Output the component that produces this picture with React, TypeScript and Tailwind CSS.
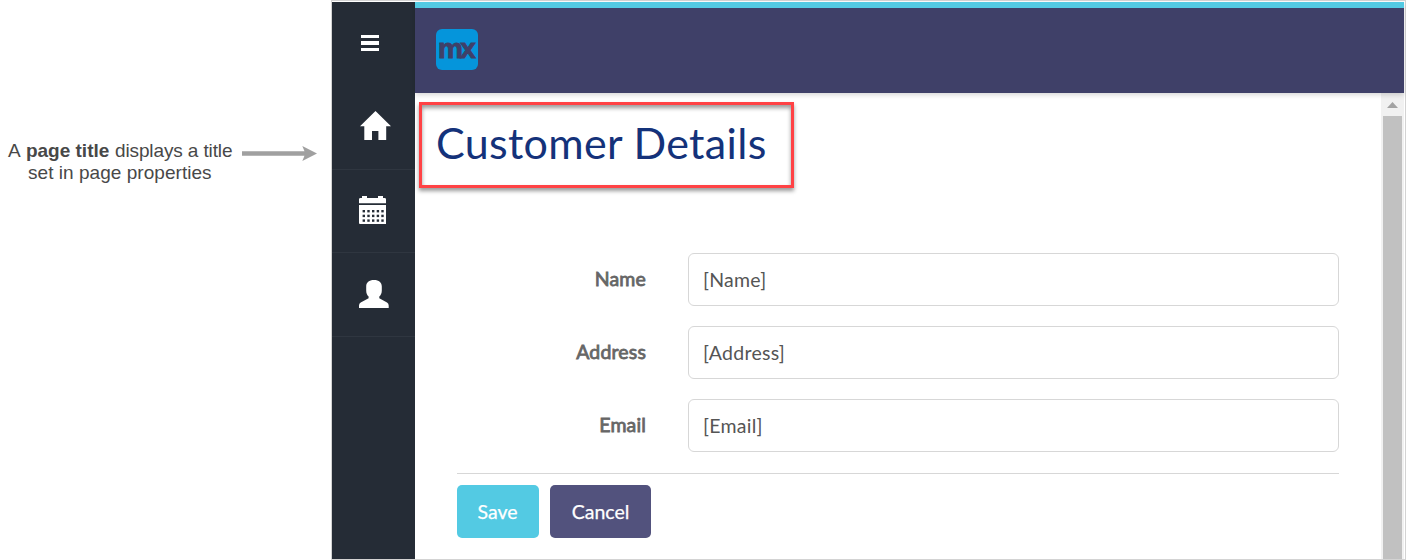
import type { ReactNode } from "react";

const fields = [
  { label: "Name", value: "[Name]" },
  { label: "Address", value: "[Address]" },
  { label: "Email", value: "[Email]" },
];

function HomeIcon() {
  return (
    <svg className="block" width="31" height="29" viewBox="0 0 31 29" fill="#fff">
      <path d="M15.5 0 31 15.2H26.2V29H18.4V20H12V29H4.3V15.2H0Z" />
    </svg>
  );
}

function CalendarIcon() {
  const columns = [3.6, 8.3, 13, 17.7, 22.3];
  const rows = [14, 18.7, 23.4];
  return (
    <svg className="block" width="27" height="28" viewBox="0 0 27 28">
      <path
        fill="#fff"
        d="M0 7.2V3.3Q0 2 1.5 2H3V0H8V2H19V0H24V2H25.5Q27 2 27 3.3V7.2ZM0 9H27V28H1Q0 28 0 27Z"
      />
      {rows.map((y) =>
        columns.map((x) => (
          <rect key={`${x}-${y}`} x={x} y={y} width="2.4" height="2.4" fill="#252c36" />
        )),
      )}
    </svg>
  );
}

function UserIcon() {
  return (
    <svg className="block" width="30" height="28" viewBox="0 0 30 28" fill="#fff">
      <path d="M15 0C20 0 22.8 2.4 22.8 6.5V10.5C22.8 13.4 21.8 15.2 20.3 16.6V18.2L28 22.6Q29.7 23.8 29.7 25.5V28H0V25.5Q0 23.8 1.7 22.6L9.6 18.2V16.6C8.1 15.2 7.2 13.4 7.2 10.5V6.5C7.2 2.4 10 0 15 0Z" />
    </svg>
  );
}

function NavItem({ children, className }: { children: ReactNode; className: string }) {
  return <div className={`flex border-b border-[#2f3640] ${className}`}>{children}</div>;
}

function Sidebar() {
  return (
    <nav className="w-[83px] shrink-0 bg-[#252c36]">
      <div className="flex h-[84px] flex-col gap-[3px] pl-[29px] pt-[33px]">
        <span className="h-[3px] w-[18px] bg-white" />
        <span className="h-[4px] w-[18px] bg-white" />
        <span className="h-[3px] w-[18px] bg-white" />
      </div>
      <NavItem className="h-[84px] pl-[28px] pt-[25px]">
        <HomeIcon />
      </NavItem>
      <NavItem className="h-[83px] pl-[27px] pt-[26px]">
        <CalendarIcon />
      </NavItem>
      <NavItem className="h-[84px] pl-[27px] pt-[27px]">
        <UserIcon />
      </NavItem>
    </nav>
  );
}

function Annotation() {
  return (
    <aside className="flex w-[331px] shrink-0 pl-[8px] pt-[140px] font-['Liberation_Sans',sans-serif] text-[19px] leading-[22px] text-[#484848]">
      <p className="w-[225px] whitespace-nowrap">
        A <b className="ml-px mr-[0.5px]">page title</b>
        <span className="tracking-[-0.12px]"> displays a title</span>
        <br />
        <span className="pl-[20px] tracking-[0.04px]">set in page properties</span>
      </p>
      <svg className="ml-[9px] mt-[6px] block" width="76" height="16" viewBox="0 0 76 16" fill="#a0a0a0">
        <path d="M0 5.2H62.5L60.3 0 75 7.5 60.3 15 62.5 9.8H0Z" />
      </svg>
    </aside>
  );
}

export default function App() {
  return (
    <div className="flex h-[560px] w-[1406px] overflow-hidden bg-white font-['Lato',sans-serif]">
      <Annotation />
      <div className="flex flex-1 border border-[#d3d3d3] pr-px pt-px">
        <Sidebar />
        <div className="flex min-w-0 flex-1 flex-col">
          <header className="z-10 h-[91px] shrink-0 border-t-[6px] border-[#53cae3] bg-[#3f4068] pl-[21px] pt-[21px] shadow-[0_2px_5px_rgba(0,0,0,0.16)]">
            <div className="flex h-[41px] w-[42px] justify-center rounded-[6px] bg-[#0595db] font-['Liberation_Sans',sans-serif] text-[28px] font-bold leading-[40px] tracking-[-2.8px] text-[#3f4068] [-webkit-text-stroke:0.9px_#3f4068]">
              <span className="-ml-[3px]">mx</span>
            </div>
          </header>
          <div className="flex min-h-0 flex-1">
            <main className="min-w-0 flex-1">
              <div className="ml-[4px] mt-[9px] h-[86px] w-[375px] border-3 border-[#ff4245] pl-[14px] shadow-[0_3px_4px_rgba(0,0,0,0.4),inset_0_3px_4px_rgba(0,0,0,0.4)]">
                <h1 className="whitespace-nowrap text-[43px] leading-[76px] tracking-[0.33px] text-[#14327a]">
                  Customer Details
                </h1>
              </div>
              <form className="ml-[42px] mt-[65px] w-[882px]">
                <div className="flex flex-col gap-[20px] border-b border-[#d7d7d7] pb-[21px]">
                  {fields.map(({ label, value }) => (
                    <div key={label} className="flex h-[53px] items-center">
                      <label className="w-[189px] pb-px text-right text-[19.5px] tracking-[0.15px] text-[#666] [-webkit-text-stroke:0.8px_#666]">
                        {label}
                      </label>
                      <div className="ml-[42px] flex h-[53px] flex-1 items-center rounded-[6px] border border-[#d7d7d7] pl-[14px] pt-px text-[19.5px] tracking-[0.27px] text-[#555]">
                        {value}
                      </div>
                    </div>
                  ))}
                </div>
                <div className="mt-[11px] flex gap-[11px] text-[19.5px] text-white [-webkit-text-stroke:0.25px_#fff]">
                  <button type="button" className="h-[53px] w-[82px] rounded-[5px] bg-[#53cae3] pr-px">
                    Save
                  </button>
                  <button type="button" className="h-[53px] w-[101px] rounded-[5px] bg-[#52527d]">
                    Cancel
                  </button>
                </div>
              </form>
            </main>
            <div className="flex w-[23px] shrink-0 flex-col bg-[#f1f1f1]">
              <svg className="ml-[6px] mt-[9px] block" width="11" height="6" viewBox="0 0 11 6" fill="#a3a3a3">
                <path d="M5.5 0 11 6H0Z" />
              </svg>
              <div className="ml-[2px] mt-[8px] w-[19px] flex-1 bg-[#c1c1c1]" />
            </div>
          </div>
        </div>
      </div>
    </div>
  );
}
